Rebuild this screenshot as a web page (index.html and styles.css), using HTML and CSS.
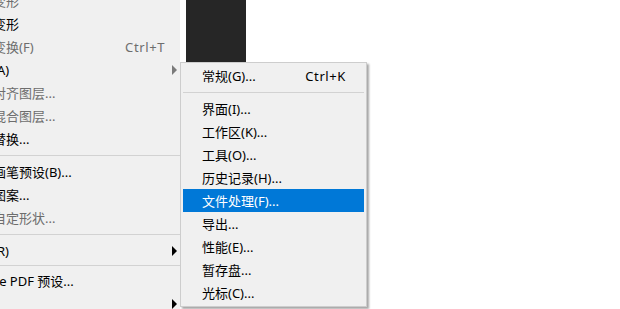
FILE: index.html
```html
<!DOCTYPE html>
<html lang="zh-CN">
<head>
<meta charset="UTF-8" />
<meta name="viewport" content="width=device-width, initial-scale=1" />
<title>编辑 - 首选项</title>
<link rel="stylesheet" href="styles.css">
</head>
<body>
<div class="desk">
    <ul class="menu menu-main">
        <li class="item off"><span class="label">操控变形</span></li>
        <li class="item"><span class="label">透视变形</span></li>
        <li class="item off"><span class="label">自由变换(F)</span><span class="keys">Ctrl+T</span><span class="arrow-cell"></span></li>
        <li class="item"><span class="label">变换(A)</span><span class="arrow-cell"><i class="arrow dim"></i></span></li>
        <li class="item off"><span class="label">自动对齐图层...</span></li>
        <li class="item off"><span class="label">自动混合图层...</span></li>
        <li class="item"><span class="label">天空替换...</span></li>
        <li class="sep"></li>
        <li class="item"><span class="label">定义画笔预设(B)...</span></li>
        <li class="item"><span class="label">定义图案...</span></li>
        <li class="item off"><span class="label">定义自定形状...</span></li>
        <li class="sep"></li>
        <li class="item"><span class="label">清理(R)</span><span class="arrow-cell"><i class="arrow"></i></span></li>
        <li class="sep sep-tight"></li>
        <li class="item"><span class="label">Adobe PDF 预设...</span></li>
        <li class="item"><span class="label">预设</span><span class="arrow-cell"><i class="arrow"></i></span></li>
    </ul>

    <div class="panel"></div>

    <ul class="menu menu-sub">
        <li class="item"><span class="label">常规(G)...</span><span class="keys">Ctrl+K</span></li>
        <li class="sep"></li>
        <li class="item"><span class="label">界面(I)...</span></li>
        <li class="item"><span class="label">工作区(K)...</span></li>
        <li class="item"><span class="label">工具(O)...</span></li>
        <li class="item"><span class="label">历史记录(H)...</span></li>
        <li class="item active"><span class="label">文件处理(F)...</span></li>
        <li class="item"><span class="label">导出...</span></li>
        <li class="item"><span class="label">性能(E)...</span></li>
        <li class="item"><span class="label">暂存盘...</span></li>
        <li class="item"><span class="label">光标(C)...</span></li>
    </ul>
</div>
</body>
</html>
```

FILE: styles.css
```css
body {
    margin: 0;
    background: #fff;
    font-family: "Noto Sans", "Noto Sans CJK SC", sans-serif;
    font-size: 13px;
    color: #000;
    overflow: hidden;
}
.desk {
    position: relative;
    display: flex;
    align-items: flex-start;
    height: 309px;
    overflow: hidden;
}
.menu {
    list-style: none;
    margin: 0;
    padding: 0;
    background: #f0f0f0;
}
.item {
    display: flex;
    align-items: center;
    height: 23px;
    white-space: nowrap;
}
.label {
    flex: 1;
}
.keys {
    letter-spacing: 0.6px;
}
.off {
    color: #6d6d6d;
}
.sep {
    height: 10px;
    display: flex;
    align-items: center;
}
.sep::before {
    content: "";
    flex: 1;
    border-top: 1px solid #d2d2d2;
}
.sep-tight {
    height: 7px;
}

/* main edit menu, clipped on the left by the window edge */
.menu-main {
    width: 235px;
    margin-left: -55px;
    margin-top: -11px;
    height: 330px;
}
.menu-main .item {
    padding-left: 22px;
    padding-right: 3px;
}
.menu-main .keys {
    margin-right: 7px;
}
.arrow-cell {
    width: 5px;
    display: flex;
    align-items: center;
}
.arrow {
    display: block;
    width: 0;
    height: 0;
    border-left: 5px solid #000;
    border-top: 5px solid transparent;
    border-bottom: 5px solid transparent;
}
.arrow.dim {
    border-left-color: #7a7a7a;
}

.panel {
    width: 60px;
    height: 62px;
    margin-left: 6px;
    background: #262626;
}

/* preferences flyout */
.menu-sub {
    position: absolute;
    left: 180px;
    top: 62px;
    width: 187px;
    box-sizing: border-box;
    padding: 1px 2px 2px;
    border: 1px solid #cdcdcd;
    box-shadow: 2px 2px 2px rgba(0, 0, 0, 0.35);
}
.menu-sub .item {
    padding-left: 19px;
    padding-right: 18px;
}
.menu-sub .active {
    background: #0078d7;
    color: #fff;
}
```
